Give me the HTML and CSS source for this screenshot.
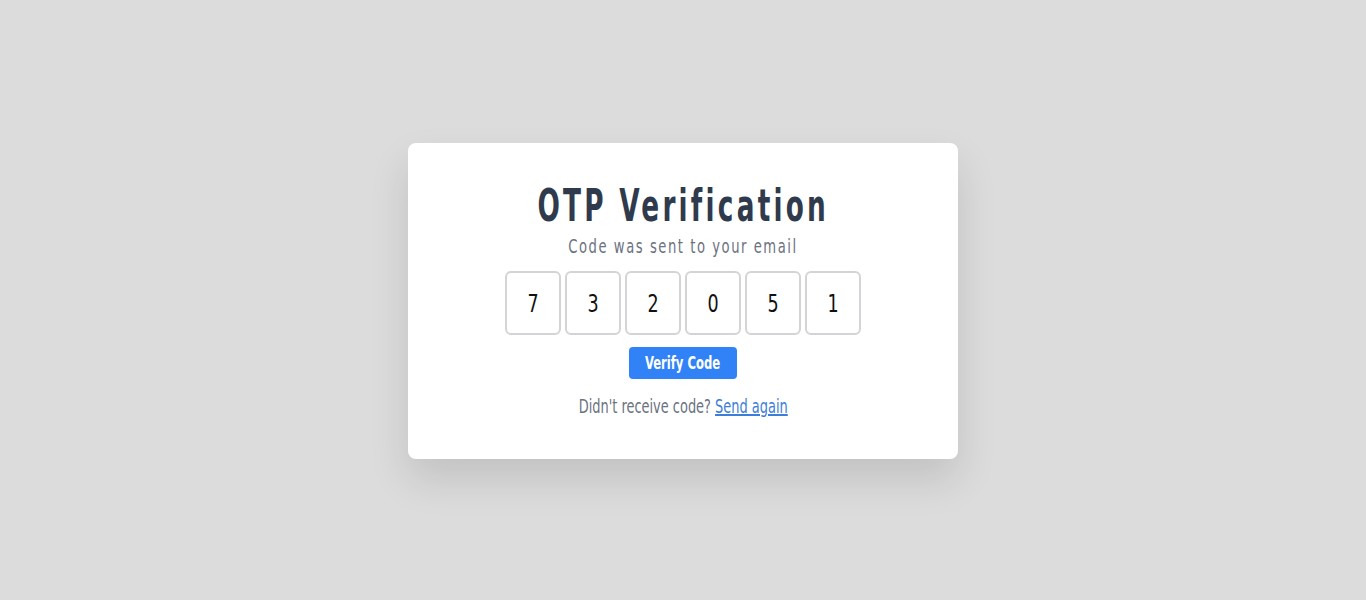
FILE: index.html
```html
<!DOCTYPE html>
<html>
<head>
<meta charset="utf-8">
<link rel="stylesheet" href="styles.css">
</head>
<body>
<main class="page">
  <section class="card">
    <h1 class="title">OTP Verification</h1>
    <p class="subtitle">Code was sent to your email</p>
    <div class="digits">
      <div class="digit"><span class="digit-char">7</span></div>
      <div class="digit"><span class="digit-char">3</span></div>
      <div class="digit"><span class="digit-char">2</span></div>
      <div class="digit"><span class="digit-char">0</span></div>
      <div class="digit"><span class="digit-char">5</span></div>
      <div class="digit"><span class="digit-char">1</span></div>
    </div>
    <button class="verify"><span class="verify-label">Verify Code</span></button>
    <p class="resend">Didn't receive code? <a class="resend-link" href="#">Send again</a></p>
  </section>
</main>
</body>
</html>
```
FILE: styles.css
```css
html, body {
  margin: 0;
  padding: 0;
  background: #dcdcdc;
  font-family: "DejaVu Sans Condensed", "DejaVu Sans", sans-serif;
}
.page {
  height: 600px;
  box-sizing: border-box;
  padding-top: 2px;
  display: flex;
  align-items: center;
  justify-content: center;
}
.card {
  width: 550px;
  height: 316px;
  box-sizing: border-box;
  background: #fff;
  border-radius: 8px;
  box-shadow: 0 20px 40px rgba(0,0,0,0.12);
  display: flex;
  flex-direction: column;
  align-items: center;
  padding-top: 38px;
}
.title {
  margin: 0;
  font-size: 45px;
  font-weight: 700;
  letter-spacing: 5px;
  color: #2f3b4c;
  line-height: 50px;
  white-space: nowrap;
  transform: scaleX(0.65);
}
.subtitle {
  margin: 2px 0 0;
  font-size: 19px;
  letter-spacing: 2px;
  color: #6b7280;
  line-height: 26px;
  white-space: nowrap;
  transform: scaleX(0.77);
}
.digits {
  display: flex;
  gap: 4px;
  margin-top: 12px;
}
.digit {
  width: 56px;
  height: 64px;
  box-sizing: border-box;
  border: 2px solid #d4d4d8;
  border-radius: 6px;
  display: flex;
  align-items: center;
  justify-content: center;
  font-size: 25px;
  color: #111;
}
.digit-char {
  display: inline-block;
  transform: scaleX(0.78);
}
.verify {
  margin-top: 12px;
  width: 108px;
  height: 32px;
  padding: 0;
  border: 0;
  border-radius: 4px;
  background: #3182f6;
  color: #fff;
  font-family: inherit;
  font-size: 17px;
  font-weight: 700;
  white-space: nowrap;
  display: flex;
  align-items: center;
  justify-content: center;
}
.verify-label {
  display: inline-block;
  transform: scaleX(0.76);
}
.resend {
  margin: 14px 0 0;
  font-size: 20px;
  color: #6b7280;
  line-height: 26px;
  white-space: nowrap;
  transform: scaleX(0.72);
}
.resend-link {
  color: #3b7dd8;
  text-decoration: underline;
}
```
